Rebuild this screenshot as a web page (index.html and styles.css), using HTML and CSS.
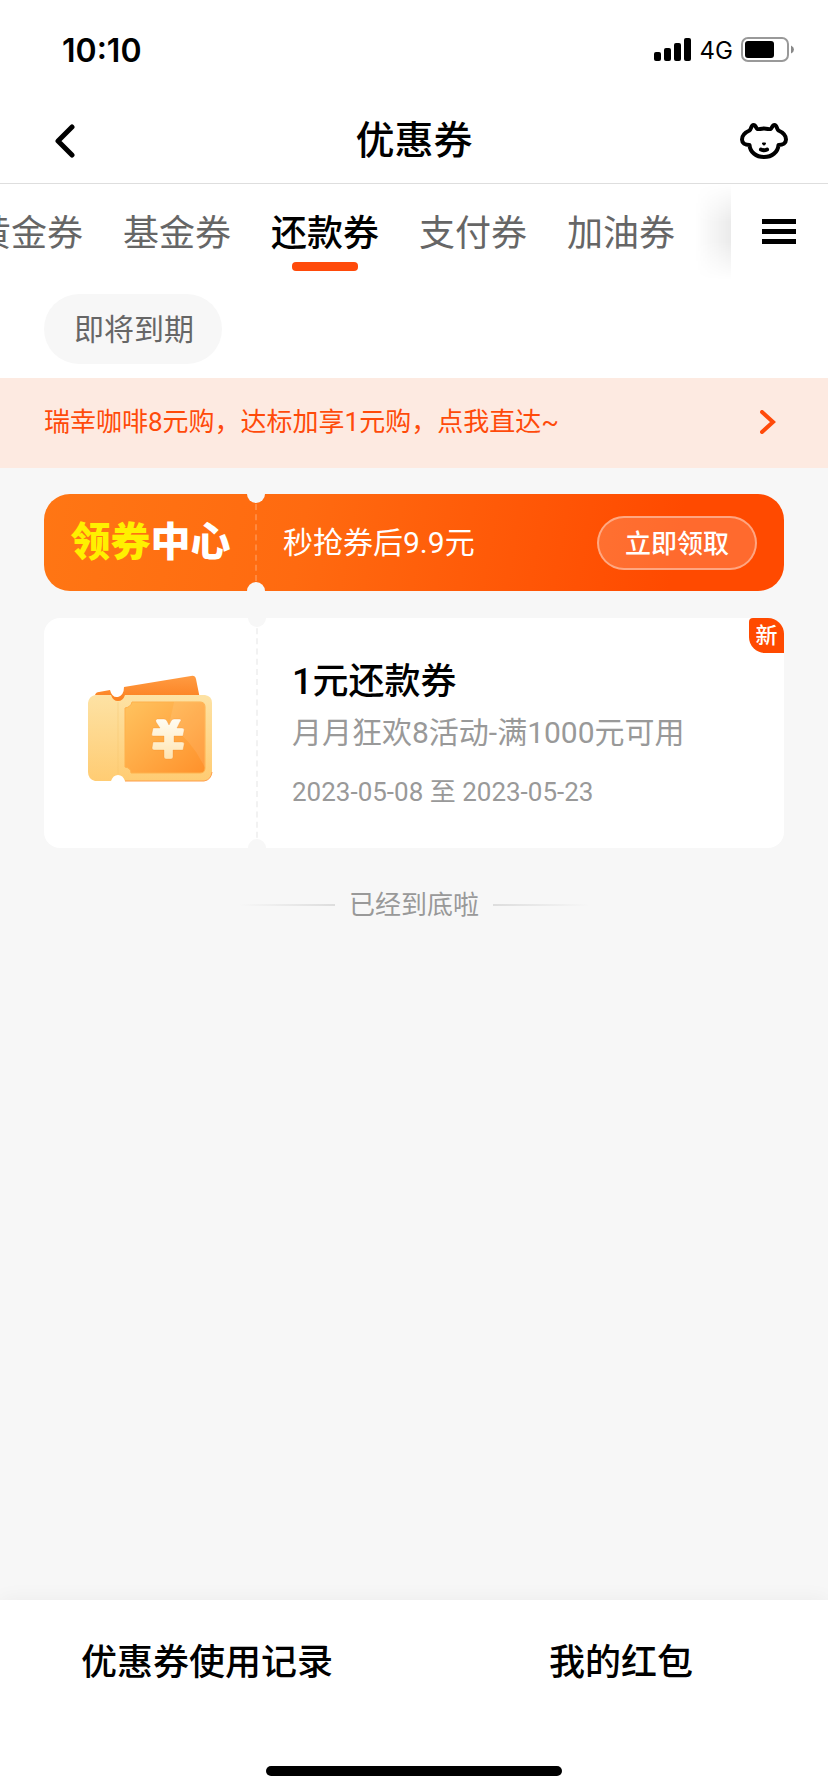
FILE: index.html
```html
<!DOCTYPE html>
<html lang="zh-CN">
<head>
<meta charset="utf-8">
<meta name="viewport" content="width=device-width, initial-scale=1">
<title>优惠券</title>
<link rel="stylesheet" href="styles.css">
</head>
<body>
<div class="app">
  <div class="status">
    <span class="status-time">10:10</span>
    <div class="status-right">
      <svg class="signal" width="38" height="24" viewBox="0 0 38 24" aria-hidden="true">
        <rect x="0" y="14" width="7" height="9" rx="2"/><rect x="10" y="10" width="7" height="13" rx="2"/><rect x="20" y="5" width="7" height="18" rx="2"/><rect x="30" y="0" width="7" height="23" rx="2"/>
      </svg>
      <span class="status-net">4G</span>
      <svg width="54" height="26" viewBox="0 0 54 26" aria-hidden="true">
        <rect x="1" y="1" width="46" height="23" rx="6" fill="none" stroke="#999" stroke-width="2"/>
        <rect x="4" y="4" width="29" height="17" rx="3"/>
        <path d="M50 8.500q3 1.500 3 4t-3 4z" fill="#888"/>
      </svg>
    </div>
  </div>

  <header class="header">
    <button class="icon-btn" aria-label="返回">
      <svg width="22" height="34" viewBox="0 0 22 34"><path d="M18 3 4 17 18 31" fill="none" stroke="#000" stroke-width="5" stroke-linecap="round" stroke-linejoin="round"/></svg>
    </button>
    <h1 class="title">优惠券</h1>
    <button class="icon-btn icon-btn-end" aria-label="客服">
      <svg width="48" height="36" viewBox="0 0 48 36">
        <path d="M24 5.500C20.500 5.500 19 6.500 17.500 6C16 5.500 16 2 13.500 2C11 2 11.500 6 9.500 7.500C6 9 2 11.500 2 16.500C2 20 5 22 9.500 22C10 29 16 34 24 34C32 34 38 29 38.500 22C43 22 46 20 46 16.500C46 11.500 42 9 38.500 7.500C36.500 6 37 2 34.500 2C32 2 32 5.500 30.500 6C29 6.500 27.500 5.500 24 5.500Z" fill="none" stroke="#000" stroke-width="4" stroke-linejoin="round"/>
        <path d="M23 20.500h2l-1 1z" stroke="#000" stroke-width="2" stroke-linejoin="round"/>
        <path d="M21 26.500q3 1.500 6 0" fill="none" stroke="#000" stroke-width="4" stroke-linecap="round"/>
      </svg>
    </button>
  </header>

  <div class="tabs">
    <nav class="tabs-view">
      <div class="tabs-strip">
        <a class="tab" href="#">黄金券</a>
        <a class="tab" href="#">基金券</a>
        <a class="tab tab-active" href="#" aria-current="page">还款券</a>
        <a class="tab" href="#">支付券</a>
        <a class="tab" href="#">加油券</a>
      </div>
    </nav>
    <button class="menu" aria-label="全部分类"><span></span><span></span><span></span></button>
  </div>

  <div class="filters"><button class="chip">即将到期</button></div>

  <a class="notice" href="#">
    <span>瑞幸咖啡8元购，达标加享1元购，点我直达~</span>
    <svg width="16" height="24" viewBox="0 0 16 24" aria-hidden="true"><path d="M2 2 13 12 2 22" fill="none" stroke="#ff4a0a" stroke-width="4" stroke-linecap="round"/></svg>
  </a>

  <main class="content">
    <section class="banner">
      <div class="stub brand"><span class="brand-hot">领券</span><span>中心</span></div>
      <div class="banner-body">
        <span class="banner-text">秒抢券后9.9元</span>
        <button class="claim">立即领取</button>
      </div>
    </section>

    <article class="coupon">
      <div class="stub">
        <svg width="126" height="108" viewBox="0 0 126 108" aria-hidden="true">
          <defs>
            <linearGradient id="back" x1="0" y1="0" x2="0" y2="1"><stop offset="0" stop-color="#ff9b42"/><stop offset="1" stop-color="#fb7a18"/></linearGradient>
            <linearGradient id="paper" x1="0" y1="0" x2="0" y2="1"><stop offset="0" stop-color="#fde2a4"/><stop offset="1" stop-color="#ffcc73"/></linearGradient>
            <linearGradient id="face" x1="0" y1="0" x2="1" y2="1"><stop offset="0" stop-color="#ffc35f"/><stop offset="1" stop-color="#ff912b"/></linearGradient>
            <linearGradient id="yen" x1="0" y1="0" x2="0" y2="1"><stop offset="0" stop-color="#fffdf3"/><stop offset="1" stop-color="#ffe4b0"/></linearGradient>
          </defs>
          <path d="M8 20Q9 17 12 17L23 15Q25 23 31 22Q37 20 37 12L104 1Q108 0 109 4L113 24V32H8Z" fill="url(#back)"/>
          <path d="M8 20H24Q26 26 31 26T38 20H118Q125 21 125 28V97Q124 105 117 106H38Q36 100 31 100T24 106H8Q1 104 1 97V28Q2 21 8 20Z" fill="url(#paper)"/>
          <path d="M38 106H117Q124 105 125 97" fill="none" stroke="#ff9e48" stroke-width="1"/>
          <path d="M31 27V99" stroke="#f5c46c" stroke-opacity=".4"/>
          <path d="M45 27H113Q118 27 118 32V93Q118 98 113 98H44Q44 93 38 92V33Q44 32 45 27Z" fill="url(#face)" stroke="#ffb14c"/>
          <path d="M87 27H113Q118 27 118 32V93Q105 65 82 50Z" fill="#fff" fill-opacity=".09"/>
          <path d="M70 44H77Q79 44 80 46L82 50 84 46Q85 44 87 44H93Q95 45 93 47L90 53H95Q98 53 97 56L96 61H87V67H95Q98 67 97 70L96 75H86V82Q86 84 84 84H79Q77 84 77 82V75H67Q65 75 65 73L66 67H77V61H66Q64 61 65 58L66 53H73L69 47Q68 45 70 44Z" fill="url(#yen)" stroke="#f18422" stroke-opacity=".3"/>
        </svg>
      </div>
      <div class="coupon-body">
        <h2 class="coupon-title">1元还款券</h2>
        <p class="coupon-desc">月月狂欢8活动-满1000元可用</p>
        <p class="coupon-date">2023-05-08 至 2023-05-23</p>
      </div>
      <span class="badge">新</span>
    </article>

    <p class="end">已经到底啦</p>
  </main>

  <footer class="footer">
    <nav class="footer-nav">
      <a href="#">优惠券使用记录</a>
      <a href="#">我的红包</a>
    </nav>
    <div class="home"></div>
  </footer>
</div>
</body>
</html>
```
FILE: styles.css
```css
* { box-sizing: border-box; }
body {
  margin: 0;
  font-family: Roboto, "Noto Sans CJK SC", sans-serif;
  color: #000;
  background: #f7f7f7;
}
h1, h2, p { margin: 0; }
a { color: inherit; text-decoration: none; }
button { font: inherit; color: inherit; border: 0; padding: 0; background: none; }
svg { display: block; flex: none; }

.app { min-height: 100vh; display: flex; flex-direction: column; }

.status {
  height: 96px;
  padding: 4px 33px 0 62px;
  display: flex;
  align-items: center;
  justify-content: space-between;
  background: #fff;
  font-family: Inter, sans-serif;
}
.status-time { font-size: 32px; font-weight: 600; }
.status-right { display: flex; align-items: center; gap: 8px; }
.status-net { font-size: 24px; }

.header {
  height: 88px;
  padding: 2px 40px 0 54px;
  display: grid;
  grid-template-columns: 46px 1fr 60px;
  align-items: center;
  background: #fff;
  border-bottom: 1px solid #dedede;
}
.icon-btn-end { justify-self: end; }
.title { font-size: 39px; font-weight: 500; line-height: 48px; text-align: center; }

.tabs { height: 96px; display: flex; background: #fff; }
.tabs-view { flex: 1; overflow: hidden; position: relative; }
.tabs-view::after {
  content: "";
  position: absolute;
  inset: 0 0 0 auto;
  width: 36px;
  background: linear-gradient(to right, rgba(0, 0, 0, 0), rgba(0, 0, 0, .08));
  mask-image: linear-gradient(transparent, #000 40%, #000 60%, transparent);
}
.tabs-strip { display: flex; margin-left: -45px; height: 96px; }
.tab {
  flex: none;
  padding: 0 20px;
  font-size: 36px;
  line-height: 100px;
  color: #666;
  position: relative;
}
.tab-active { color: #000; font-weight: 500; }
.tab-active::after {
  content: "";
  position: absolute;
  left: 50%;
  bottom: 9px;
  width: 66px;
  height: 9px;
  margin-left: -33px;
  border-radius: 4px;
  background: #ff4a0a;
}
.menu {
  width: 97px;
  padding: 0 32px 2px 31px;
  display: flex;
  flex-direction: column;
  justify-content: center;
  gap: 5px;
}
.menu span { height: 5px; background: #000; }

.filters { padding: 14px 44px; background: #fff; }
.chip {
  display: block;
  padding: 2px 28px 0 30px;
  line-height: 68px;
  border-radius: 35px;
  font-size: 30px;
  color: #666;
  background: #f7f7f7;
}

.notice {
  height: 90px;
  padding: 0 52px 2px 44px;
  display: flex;
  align-items: center;
  justify-content: space-between;
  font-size: 26px;
  line-height: 36px;
  color: #ff4a0a;
  background: #fdeae1;
}

.content { flex: 1; padding: 26px 44px; }

.stub {
  position: relative;
  display: flex;
  align-items: center;
  justify-content: center;
  border-right: 2px dashed #f2f2f2;
}
.stub::before, .stub::after {
  content: "";
  position: absolute;
  right: -10px;
  width: 18px;
  height: 9px;
  background: #f7f7f7;
}
.stub::before { top: 0; border-radius: 0 0 9px 9px; }
.stub::after { bottom: 0; border-radius: 9px 9px 0 0; }

.banner {
  height: 97px;
  display: grid;
  grid-template-columns: 213px 1fr;
  border-radius: 26px;
  overflow: hidden;
  color: #fff;
  background: linear-gradient(100deg, #ff7614, #ff6a10 35%, #ff4a00 85%);
}
.brand { padding-left: 2px; font-size: 40px; font-weight: 900; line-height: 60px; border-right-color: rgba(255, 255, 255, .2); }
.brand-hot { color: #fff000; }
.banner-body {
  padding: 0 27px 0 26px;
  display: flex;
  align-items: center;
  justify-content: space-between;
}
.banner-text { font-size: 30px; line-height: 50px; }
.claim {
  padding: 2px 26px 0;
  line-height: 48px;
  font-size: 26px;
  font-weight: 500;
  border: 2px solid rgba(255, 255, 255, .4);
  border-radius: 27px;
  background: rgba(255, 255, 255, .18);
}

.coupon {
  position: relative;
  min-height: 230px;
  margin-top: 27px;
  display: grid;
  grid-template-columns: 214px 1fr;
  border-radius: 16px;
  background: #fff;
}
.coupon .stub { padding-bottom: 8px; }
.coupon-body { padding: 38px 32px 32px 34px; }
.coupon-title { font-size: 36px; font-weight: 500; line-height: 52px; }
.coupon-desc { font-size: 30px; line-height: 50px; color: #999; }
.coupon-date { margin-top: 14px; font-size: 26px; line-height: 40px; color: #999; }
.badge {
  position: absolute;
  top: 0;
  right: 0;
  width: 35px;
  border-radius: 4px 16px 0 16px;
  font-size: 22px;
  font-weight: 500;
  line-height: 35px;
  text-align: center;
  color: #fff;
  background: #ff4a00;
}

.end {
  margin-top: 39px;
  display: flex;
  align-items: center;
  justify-content: center;
  gap: 14px;
  font-size: 26px;
  line-height: 36px;
  color: #999;
}
.end::before, .end::after {
  content: "";
  width: 96px;
  height: 2px;
  background: linear-gradient(to right, transparent, #ddd);
}
.end::after { background: linear-gradient(to left, transparent, #ddd); }

.footer { background: #fff; box-shadow: 0 0 20px rgba(0, 0, 0, .05); }
.footer-nav {
  display: grid;
  grid-template-columns: 1fr 1fr;
  text-align: center;
  font-size: 36px;
  font-weight: 500;
  line-height: 126px;
}
.home {
  width: 296px;
  height: 10px;
  margin: 40px auto 16px;
  border-radius: 5px;
  background: #000;
}
```
